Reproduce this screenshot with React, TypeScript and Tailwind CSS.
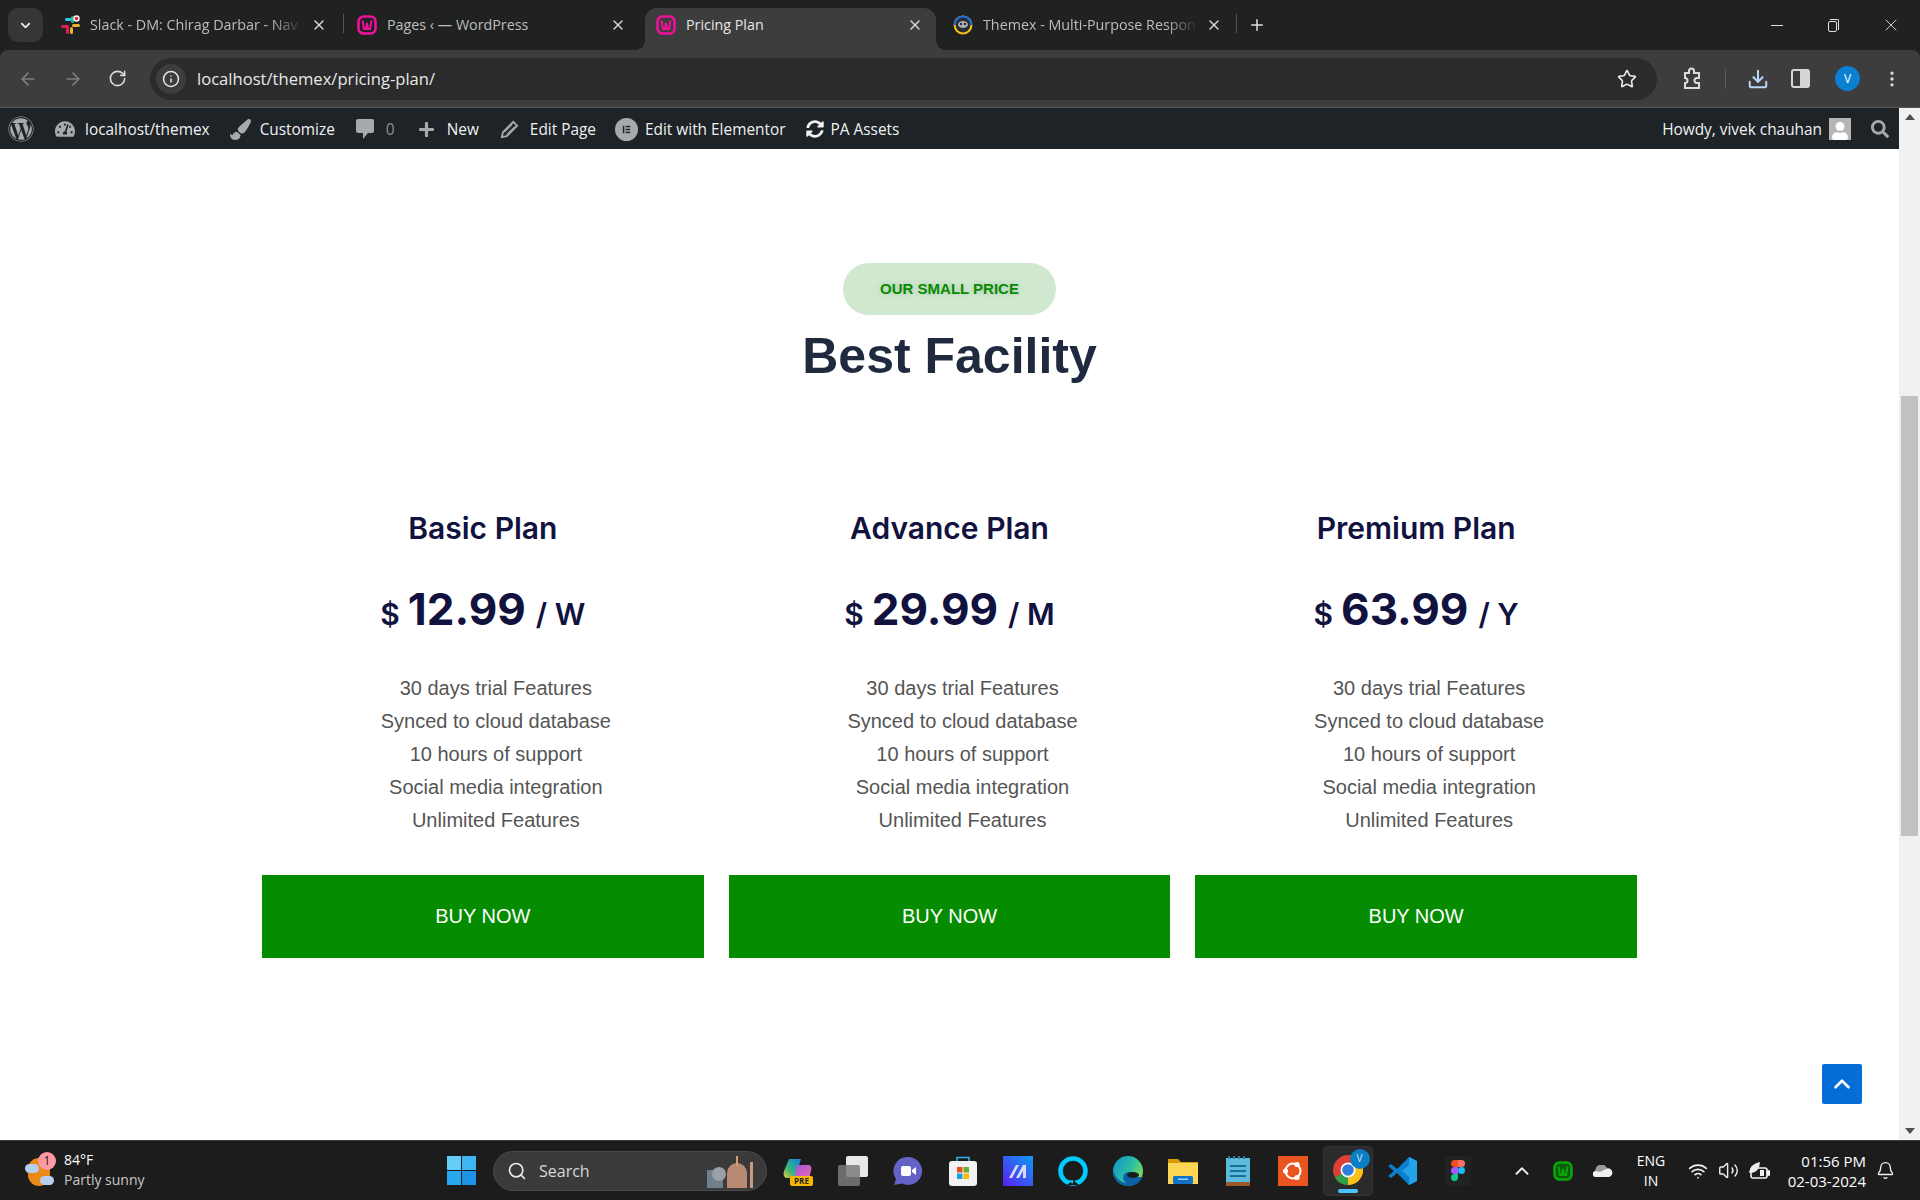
import {
  ArrowLeft,
  ArrowRight,
  Bell,
  ChevronDown,
  ChevronUp,
  Download,
  Info,
  MoreVertical,
  Plus,
  RotateCw,
  Search,
  Star,
  Volume2,
  Wifi,
  X,
} from "lucide-react";
import { FaPaintBrush, FaPlus, FaSearch, FaSyncAlt, FaTachometerAlt, FaUser, FaWordpress } from "react-icons/fa";

const plans = [
  { name: "Basic Plan", price: "12.99", period: "W" },
  { name: "Advance Plan", price: "29.99", period: "M" },
  { name: "Premium Plan", price: "63.99", period: "Y" },
];

const features = [
  "30 days trial Features",
  "Synced to cloud database",
  "10 hours of support",
  "Social media integration",
  "Unlimited Features",
];

function SlackIcon() {
  return (
    <svg viewBox="0 0 20 20" className="w-5 h-5 shrink-0">
      <rect x="7" y="1" width="3" height="7" rx="1.5" fill="#36c5f0" transform="rotate(90 8.5 4.5)" />
      <rect x="11" y="1" width="3" height="7" rx="1.5" fill="#2eb67d" />
      <rect x="12" y="9" width="8" height="3" rx="1.5" fill="#ecb22e" />
      <rect x="10" y="12" width="3" height="7" rx="1.5" fill="#ecb22e" />
      <rect x="1" y="10" width="8" height="3" rx="1.5" fill="#e01e5a" />
      <rect x="6" y="12" width="3" height="7" rx="1.5" fill="#e01e5a" />
      <circle cx="16.5" cy="3.5" r="3.2" fill="#fff" />
      <circle cx="16.5" cy="3.5" r="1.8" fill="#e01e4b" />
    </svg>
  );
}

function WampIcon({ color = "#f0109a", dark = false }: { color?: string; dark?: boolean }) {
  return (
    <svg viewBox="0 0 20 20" className="w-5 h-5 shrink-0">
      <rect x="1.5" y="1.5" width="17" height="17" rx="5" fill={dark ? "#0a5a0a" : "none"} stroke={color} strokeWidth="2.6" />
      <path d="M5.5 5.5 L7 14 H9 L10 8 L11 14 H13 L14.5 5.5" fill="none" stroke={color} strokeWidth="2" />
    </svg>
  );
}

function ThemexIcon() {
  return (
    <svg viewBox="0 0 20 20" className="w-5 h-5 shrink-0">
      <circle cx="10" cy="10" r="9.4" fill="#f5c518" />
      <path d="M0.6 10 A9.4 9.4 0 0 1 19.4 10 Z" fill="#1b6fe0" />
      <circle cx="10" cy="10" r="7.4" fill="#2a2d30" />
      <ellipse cx="10" cy="9.5" rx="5" ry="3.6" fill="#aab0b6" />
      <circle cx="8" cy="9" r="1.2" fill="#2a2d30" />
      <circle cx="12" cy="9" r="1.2" fill="#2a2d30" />
    </svg>
  );
}

function Tab({
  icon,
  title,
  className,
  active,
  divider,
  fade,
}: {
  icon: React.ReactNode;
  title: string;
  className: string;
  active?: boolean;
  divider?: boolean;
  fade?: boolean;
}) {
  return (
    <div className={`relative flex items-center h-[42px] pb-[8px] ${className} ${active ? "bg-[#3d3d3d] rounded-t-[12px]" : ""}`}>
      {active && (
        <>
          <span className="absolute bottom-0 -left-[10px] w-[10px] h-[10px] bg-[radial-gradient(circle_at_0_0,transparent_10px,#3d3d3d_10px)]" />
          <span className="absolute bottom-0 -right-[10px] w-[10px] h-[10px] bg-[radial-gradient(circle_at_100%_0,transparent_10px,#3d3d3d_10px)]" />
        </>
      )}
      {icon}
      <span
        className={`ml-[10px] flex-1 overflow-hidden whitespace-nowrap text-[14.3px] ${active ? "text-[#e6e6e6]" : "text-[#bdbdbd]"} ${
          fade ? "[mask-image:linear-gradient(to_right,black_85%,transparent)]" : ""
        }`}
      >
        {title}
      </span>
      <X size={16} strokeWidth={2} className="ml-2 shrink-0 text-[#d8d8d8]" />
      {divider && <span className="absolute right-0 top-[6px] h-[19px] w-px bg-[#545454]" />}
    </div>
  );
}

function WindowControls() {
  return (
    <div className="ml-auto flex items-center h-[42px] pb-[8px] pr-[19px] text-[#e0e0e0]">
      <span className="block w-[12px] h-px bg-[#e0e0e0]" />
      <span className="relative ml-[45px] block w-[11px] h-[13px]">
        <span className="absolute left-0 bottom-0 w-[9px] h-[11px] border border-[#e0e0e0] rounded-[2px]" />
        <span className="absolute right-0 top-0 w-[9px] h-[11px] border-t border-r border-[#e0e0e0] rounded-tr-[2px]" />
      </span>
      <X size={20} strokeWidth={1.1} className="ml-[42px]" />
    </div>
  );
}

function TabStrip() {
  return (
    <div className="flex items-end h-[50px] bg-[#202222] pl-2">
      <div className="mb-[8px] flex items-center justify-center w-[35px] h-[34px] rounded-[10px] bg-[#353636]">
        <ChevronDown size={15} strokeWidth={3} className="text-[#e8e8e8]" />
      </div>
      <div className="ml-[6px] flex items-end">
        <Tab icon={<SlackIcon />} title="Slack - DM: Chirag Darbar - Nav" className="w-[295px] pl-[11px] pr-[17px]" divider fade />
        <Tab icon={<WampIcon />} title="Pages ‹ — WordPress" className="w-[301px] pl-[13px] pr-[19px]" />
        <Tab icon={<WampIcon />} title="Pricing Plan" className="w-[291px] pl-[11px] pr-[13px]" active />
        <Tab icon={<ThemexIcon />} title="Themex - Multi-Purpose Respon" className="w-[301px] pl-[17px] pr-[15px]" divider fade />
      </div>
      <div className="flex items-center h-[42px] pb-[8px] pl-[11px]">
        <Plus size={18} strokeWidth={2} className="text-[#e0e0e0]" />
      </div>
      <WindowControls />
    </div>
  );
}

function Toolbar() {
  return (
    <div className="flex items-center h-[58px] bg-[#3d3d3d] rounded-t-[8px] border-b border-[#555] pl-[18px] font-['Open_Sans',sans-serif]">
      <ArrowLeft size={20} className="text-[#7f7f7f]" />
      <ArrowRight size={20} className="ml-[25px] text-[#7f7f7f]" />
      <RotateCw size={19} className="ml-[25px] text-[#dcdcdc]" />
      <div className="ml-[23px] flex items-center w-[1507px] h-[42px] rounded-full bg-[#2b2b2b] pl-[6px]">
        <span className="flex items-center justify-center w-[30px] h-[30px] rounded-full bg-[#3d3d3d]">
          <Info size={18} className="text-[#e6e6e6]" />
        </span>
        <span className="ml-[11px] pt-[2px] text-[16.6px] text-[#e8e8e8]">localhost/themex/pricing-plan/</span>
        <Star size={20} strokeWidth={2} className="ml-auto mr-[20px] text-[#e6e6e6]" />
      </div>
      <svg viewBox="0 0 24 24" className="ml-[23px] w-[24px] h-[24px] fill-none stroke-[#dcdcdc] stroke-2">
        <path d="M5 6h4V4a2.5 2.5 0 0 1 5 0v2h5v5h-2a2.5 2.5 0 0 0 0 5h2v5H5v-5a2.5 2.5 0 0 0 0-5Z" />
      </svg>
      <span className="ml-[21px] h-[20px] w-px bg-[#5d5d5d]" />
      <Download size={22} strokeWidth={2.2} className="ml-[21px] text-[#b9d5f5]" />
      <span className="ml-[22px] flex w-[19px] h-[19px] rounded-[3px] border-2 border-[#d6d6d6]">
        <span className="ml-auto w-[8px] h-full bg-[#d6d6d6]" />
      </span>
      <span className="ml-[25px] flex items-center justify-center w-[25px] h-[25px] rounded-full bg-[#0b7fd0] text-[12px] text-white">V</span>
      <MoreVertical size={20} className="ml-[22px] text-[#dcdcdc]" />
    </div>
  );
}

function AdminBar() {
  return (
    <div className="flex items-center h-[41px] pt-[3px] bg-[#1d2327] text-[15.4px] text-[#f0f0f1] font-['Open_Sans',sans-serif] shrink-0">
      <FaWordpress size={26} className="ml-[8px] -mt-[2px] text-[#a7aaad]" />
      <FaTachometerAlt size={20} className="ml-[21px] -mt-[2px] text-[#a7aaad]" />
      <span className="ml-[10px]">localhost/themex</span>
      <FaPaintBrush size={21} className="ml-[20px] -mt-[2px] text-[#a7aaad]" />
      <span className="ml-[9px]">Customize</span>
      <svg viewBox="0 0 18 20" className="ml-[21px] -mt-[2px] w-[18px] h-[20px] fill-[#a7aaad]">
        <path d="M2 0h14a2 2 0 0 1 2 2v10a2 2 0 0 1-2 2h-4l-5 6v-6H2a2 2 0 0 1-2-2V2a2 2 0 0 1 2-2Z" />
      </svg>
      <span className="ml-[12px] text-[#8c8f94]">0</span>
      <FaPlus size={17} className="ml-[23px] -mt-[2px] text-[#a7aaad]" />
      <span className="ml-[12px]">New</span>
      <svg viewBox="0 0 20 20" className="ml-[21px] -mt-[2px] w-[19px] h-[19px] fill-none stroke-[#a7aaad] stroke-2">
        <path d="M14 2l4 4L7 17l-5 1 1-5Z" />
        <path d="M5 13l8-8M7 15l8-8" strokeWidth="1" />
      </svg>
      <span className="ml-[11px]">Edit Page</span>
      <span className="ml-[19px] -mt-[2px] flex items-center justify-center w-[23px] h-[23px] rounded-full bg-[#a7aaad]">
        <svg viewBox="0 0 12 12" className="w-[11px] h-[11px] fill-[#1d2327]">
          <rect x="2" y="2" width="1.6" height="8" />
          <rect x="5" y="2" width="5" height="1.6" />
          <rect x="5" y="5.2" width="5" height="1.6" />
          <rect x="5" y="8.4" width="5" height="1.6" />
        </svg>
      </span>
      <span className="ml-[7px]">Edit with Elementor</span>
      <FaSyncAlt size={18} className="ml-[20px] -mt-[2px] text-[#f0f0f1]" />
      <span className="ml-[7px]">PA Assets</span>
      <span className="ml-auto">Howdy, vivek chauhan</span>
      <span className="ml-[7px] -mt-[2px] flex items-end justify-center w-[22px] h-[22px] bg-[#b5b5b5] overflow-hidden">
        <FaUser size={18} className="text-white" />
      </span>
      <FaSearch size={18} className="ml-[20px] mr-[10px] -mt-[2px] text-[#a7aaad]" />
    </div>
  );
}

function PlanColumn({ plan }: { plan: (typeof plans)[number] }) {
  return (
    <div className="flex flex-col w-[441.67px] items-center">
      <h3 className="h-[36px] leading-[36px] text-[30px] font-semibold text-[#12123f] font-['Inter',sans-serif]">{plan.name}</h3>
      <div className="mt-[33px] h-[64px] flex items-baseline font-['Inter',sans-serif] text-[#12123f] font-semibold">
        <span className="text-[30px]">$</span>
        <span className="ml-[8px] text-[44px] font-bold leading-[60px]">{plan.price}</span>
        <span className="ml-[10px] text-[30px]">/ {plan.period}</span>
      </div>
      <ul className="mt-[29px] w-full pl-[26px] text-center text-[20px] leading-[33px] text-[#555] font-['Liberation_Sans',sans-serif]">
        {features.map((item) => (
          <li key={item}>{item}</li>
        ))}
      </ul>
      <a className="mt-[38px] pb-[2px] flex items-center justify-center w-full h-[83px] bg-[#058c00] text-[20px] text-white font-['Liberation_Sans',sans-serif]">
        BUY NOW
      </a>
    </div>
  );
}

function PricingPage() {
  return (
    <div className="relative flex-1 bg-white flex flex-col items-center">
      <div className="mt-[114px] flex items-center justify-center w-[213px] h-[52px] rounded-full bg-[#d0e8d0] text-[15px] font-bold text-[#058c00] font-['Liberation_Sans',sans-serif] [text-shadow:0_0_6px_rgba(0,0,0,0.18)]">
        OUR SMALL PRICE
      </div>
      <h2 className="mt-[11px] text-[50px] leading-[60px] font-bold text-[#1f2a3f] font-['Liberation_Sans',sans-serif]">Best Facility</h2>
      <div className="mt-[124px] flex gap-[25px]">
        {plans.map((plan) => (
          <PlanColumn key={plan.name} plan={plan} />
        ))}
      </div>
      <button className="absolute right-[37px] top-[915px] flex items-center justify-center w-[40px] h-[40px] rounded-[2px] bg-[#076dd6]">
        <ChevronUp size={26} strokeWidth={2.4} className="text-white" />
      </button>
    </div>
  );
}

function Scrollbar() {
  return (
    <div className="flex flex-col items-center w-[21px] bg-[#f1f1f1] shrink-0">
      <span className="mt-[6px] w-0 h-0 border-x-[5px] border-x-transparent border-b-[6px] border-b-[#505050]" />
      <div className="mt-[276px] w-[17px] h-[440px] bg-[#c1c1c1]" />
      <span className="mt-auto mb-[6px] w-0 h-0 border-x-[5px] border-x-transparent border-t-[6px] border-t-[#505050]" />
    </div>
  );
}

function TaskbarSlot({ children, active }: { children: React.ReactNode; active?: boolean }) {
  return (
    <div className={`relative flex items-center justify-center shrink-0 h-[50px] ${active ? "bg-[#2b2b2b] rounded-[5px] border border-[#343434] w-[50px] mx-[2.5px]" : "w-[55px]"}`}>
      {children}
      {active && <span className="absolute bottom-[2px] w-[20px] h-[4px] rounded-full bg-[#4cc2ff]" />}
    </div>
  );
}

function AppIcons() {
  return (
    <>
      <TaskbarSlot>
        <svg viewBox="0 0 30 30" className="w-[30px] h-[30px]">
          <defs>
            <linearGradient id="cp" x1="0" y1="1" x2="1" y2="0">
              <stop offset="0" stopColor="#f5c832" />
              <stop offset="0.4" stopColor="#2fb87a" />
              <stop offset="1" stopColor="#1a7bea" />
            </linearGradient>
            <linearGradient id="cp2" x1="0" y1="0" x2="1" y2="1">
              <stop offset="0" stopColor="#a052e0" />
              <stop offset="1" stopColor="#ee6aa8" />
            </linearGradient>
          </defs>
          <path d="M6 3h12l-6 19H4C1 22 0 19 1 15Z" fill="url(#cp)" />
          <path d="M14 9h12c2 0 3 3 2 6l-2 8H11Z" fill="url(#cp2)" />
          <rect x="7" y="20" width="23" height="10" rx="2" fill="#f5b800" />
          <text x="18.5" y="28" textAnchor="middle" className="text-[8px] font-bold" fill="#222">PRE</text>
        </svg>
      </TaskbarSlot>
      <TaskbarSlot>
        <div className="relative w-[30px] h-[30px]">
          <span className="absolute right-0 top-0 w-[22px] h-[21px] rounded-[2px] bg-[#e8e8e8]" />
          <span className="absolute left-0 bottom-0 w-[22px] h-[21px] rounded-[2px] bg-[#7a7a7a]/85" />
        </div>
      </TaskbarSlot>
      <TaskbarSlot>
        <svg viewBox="0 0 30 30" className="w-[30px] h-[30px]">
          <path d="M15 1a14 14 0 1 1-6 26.6L1 29l2-6A14 14 0 0 1 15 1Z" fill="#6461c7" />
          <rect x="8" y="10" width="10" height="10" rx="2" fill="#fff" />
          <path d="M19 14l4-3v8l-4-3Z" fill="#fff" />
        </svg>
      </TaskbarSlot>
      <TaskbarSlot>
        <svg viewBox="0 0 30 30" className="w-[30px] h-[30px]">
          <path d="M9 5V1.5h12V5" fill="none" stroke="#2db4e8" strokeWidth="1.6" />
          <rect x="1" y="5" width="28" height="25" rx="3" fill="#f2f2f2" />
          <rect x="9" y="11" width="5.5" height="5.5" fill="#e8501f" />
          <rect x="15.5" y="11" width="5.5" height="5.5" fill="#72a82a" />
          <rect x="9" y="17.5" width="5.5" height="5.5" fill="#18a0e8" />
          <rect x="15.5" y="17.5" width="5.5" height="5.5" fill="#fdb900" />
        </svg>
      </TaskbarSlot>
      <TaskbarSlot>
        <svg viewBox="0 0 30 30" className="w-[30px] h-[30px]">
          <defs>
            <linearGradient id="ma" x1="0" y1="1" x2="1" y2="0">
              <stop offset="0" stopColor="#5a1ff5" />
              <stop offset="1" stopColor="#0f9bf0" />
            </linearGradient>
          </defs>
          <rect width="30" height="30" fill="url(#ma)" />
          <path d="M6 22 13 9h3L9 22Z M13 22 20 9h3v13h-3v-7l-4 7Z" fill="#dcd8f8" />
        </svg>
      </TaskbarSlot>
      <TaskbarSlot>
        <svg viewBox="0 0 30 30" className="w-[30px] h-[30px]">
          <circle cx="15" cy="15" r="12.5" fill="none" stroke="#00caff" strokeWidth="4.6" />
          <path d="M9 29 15 24 21 29Z" fill="#1b1b1b" />
          <path d="M15 27.5 L9.5 25 L15 24Z" fill="#00caff" />
        </svg>
      </TaskbarSlot>
      <TaskbarSlot>
        <svg viewBox="0 0 30 30" className="w-[30px] h-[30px]">
          <defs>
            <linearGradient id="edge" x1="0" y1="0" x2="1" y2="0.6">
              <stop offset="0" stopColor="#0c8fd6" />
              <stop offset="0.6" stopColor="#2cc0a0" />
              <stop offset="1" stopColor="#7ed957" />
            </linearGradient>
          </defs>
          <circle cx="15" cy="15" r="15" fill="url(#edge)" />
          <path d="M30 18c-1 8-8 12-14 12C8 30 0 24 0 15c3 8 9 12 13 12-4-3-4-10 2-11 5-1 7 2 6 5h9Z" fill="#0d5fa8" />
          <ellipse cx="20" cy="19" rx="6" ry="3" fill="#1b1b1b" />
        </svg>
      </TaskbarSlot>
      <TaskbarSlot>
        <svg viewBox="0 0 30 30" className="w-[30px] h-[30px]">
          <path d="M0 3h10l3 3h17v22H0Z" fill="#d79c0f" />
          <rect y="7" width="30" height="21" fill="#fcd552" />
          <rect x="5" y="20" width="20" height="8" rx="1.5" fill="#0f74c8" />
          <rect x="10" y="22.5" width="10" height="1.5" fill="#9bd0f5" />
        </svg>
      </TaskbarSlot>
      <TaskbarSlot>
        <svg viewBox="0 0 24 30" className="w-[24px] h-[30px]">
          <rect y="2" width="24" height="26" fill="#5dbbdc" />
          <rect y="26" width="24" height="4" fill="#9a5a2a" />
          <rect x="4" y="9" width="16" height="2" fill="#1a6f96" />
          <rect x="4" y="14" width="16" height="2" fill="#1a6f96" />
          <rect x="4" y="19" width="16" height="2" fill="#1a6f96" />
          <path d="M2 0h2v3H2ZM7 0h2v3H7ZM12 0h2v3h-2ZM17 0h2v3h-2Z" fill="#2d7fa5" />
        </svg>
      </TaskbarSlot>
      <TaskbarSlot>
        <svg viewBox="0 0 30 30" className="w-[30px] h-[30px]">
          <rect width="30" height="30" fill="#e95420" />
          <circle cx="15" cy="15" r="7.5" fill="none" stroke="#fff" strokeWidth="2" />
          <circle cx="7.5" cy="15" r="2.6" fill="#fff" />
          <circle cx="19" cy="8.5" r="2.6" fill="#fff" />
          <circle cx="19" cy="21.5" r="2.6" fill="#fff" />
        </svg>
      </TaskbarSlot>
      <TaskbarSlot active>
        <div className="relative w-[30px] h-[30px] -mt-[2px]">
          <svg viewBox="0 0 30 30" className="w-[30px] h-[30px]">
            <circle cx="15" cy="15" r="15" fill="#dd3f34" />
            <path d="M15 15 2 22.5A15 15 0 0 0 15 30Z" fill="#2f9f49" />
            <path d="M15 15 15 30A15 15 0 0 0 28 7.5Z" fill="#fbc116" />
            <circle cx="15" cy="15" r="7.5" fill="#fff" />
            <circle cx="15" cy="15" r="5.8" fill="#2f7de0" />
          </svg>
          <span className="absolute -right-[7px] -top-[6px] flex items-center justify-center w-[20px] h-[20px] rounded-full bg-[#0b7fc4] text-[10px] text-[#cfe8fa]">V</span>
        </div>
      </TaskbarSlot>
      <TaskbarSlot>
        <svg viewBox="0 0 30 30" className="w-[30px] h-[30px]">
          <path d="M21 1 29 5v20l-8 4L9 17 3 22l-3-2 6-5-6-5 3-2 6 5Z" fill="#0a7fcb" />
          <path d="M21 1 29 5v20l-8 4V9l-7 6 7 6" fill="#23a3ea" />
        </svg>
      </TaskbarSlot>
      <TaskbarSlot>
        <div className="flex items-center justify-center w-[26px] h-[30px] rounded-[2px] bg-[#222]">
          <svg viewBox="0 0 14 22" className="w-[14px] h-[22px]">
            <path d="M7 0H3.5a3.5 3.5 0 0 0 0 7H7Z" fill="#f24e1e" />
            <path d="M7 0h3.5a3.5 3.5 0 0 1 0 7H7Z" fill="#ff7262" />
            <path d="M7 7H3.5a3.5 3.5 0 0 0 0 7H7Z" fill="#a259ff" />
            <circle cx="10.5" cy="10.5" r="3.5" fill="#1abcfe" />
            <path d="M7 14H3.5a3.5 3.5 0 1 0 3.5 3.5Z" fill="#0acf83" />
          </svg>
        </div>
      </TaskbarSlot>
    </>
  );
}

function Taskbar() {
  return (
    <div className="flex items-center h-[60px] bg-[#1c1c1c] border-t border-[#3a3a3a] font-['Open_Sans',sans-serif] text-white whitespace-nowrap">
      <div className="relative shrink-0 ml-[25px] w-[32px] h-[34px]">
        <span className="absolute left-[3px] top-[4px] w-[22px] h-[28px] rounded-full bg-[#ea8a16]" />
        <span className="absolute left-0 top-[10px] w-[14px] h-[9px] rounded-full bg-[#b6cff0]" />
        <span className="absolute right-[3px] bottom-[3px] w-[14px] h-[9px] rounded-full bg-[#b6cff0]" />
        <span className="absolute left-[13px] -top-[2px] flex items-center justify-center w-[18px] h-[18px] rounded-full bg-[#ff99a4] text-[12px] text-[#1c1c1c]">1</span>
      </div>
      <div className="ml-[7px] pb-[2px] flex flex-col w-[120px] shrink-0 text-[14px] leading-[20px]">
        <span>84°F</span>
        <span className="text-[#c8c8c8]">Partly sunny</span>
      </div>
      <svg viewBox="0 0 29 29" className="ml-[263px] w-[29px] h-[29px] shrink-0">
        <rect width="14" height="14" fill="#63cdfa" />
        <rect x="15" width="14" height="14" fill="#3fb6f4" />
        <rect y="15" width="14" height="14" fill="#27a7ef" />
        <rect x="15" y="15" width="14" height="14" fill="#1b93e6" />
      </svg>
      <div className="ml-[17px] flex items-center shrink-0 w-[274px] h-[40px] rounded-full bg-[#3a3a3a] border border-[#4a4a4a] pl-[13px]">
        <Search size={20} strokeWidth={2} className="text-[#e8e8e8]" />
        <span className="ml-[12px] text-[16px] text-[#d8d8d8]">Search</span>
        <svg viewBox="0 0 50 34" className="ml-auto mr-[11px] w-[50px] h-[34px]">
          <rect x="2" y="16" width="16" height="18" fill="#6f7f8c" />
          <circle cx="14" cy="20" r="7" fill="#9aa0a5" />
          <path d="M22 34V19a10 10 0 0 1 20 0v15Z" fill="#b88a72" />
          <rect x="31" y="2" width="2" height="10" fill="#d0a070" />
          <rect x="45" y="8" width="3" height="26" fill="#c89a80" />
        </svg>
      </div>
      <div className="ml-[3px] flex items-center shrink-0">
        <AppIcons />
      </div>
      <ChevronUp size={22} strokeWidth={2} className="ml-[26px] shrink-0 text-[#f0f0f0]" />
      <span className="ml-[20px] shrink-0">
        <WampIcon color="#0aa60a" dark />
      </span>
      <svg viewBox="0 0 20 12" className="ml-[20px] w-[20px] h-[12px] shrink-0">
        <path d="M3 12a3 3 0 0 1-.5-6A6 6 0 0 1 14 3.5 4 4 0 0 1 16 12Z" fill="#f0f0f0" />
        <path d="M2.5 6A6 6 0 0 1 14 3.5L7 7Z" fill="#9a9a9a" />
      </svg>
      <div className="ml-[23px] flex flex-col items-center w-[30px] shrink-0 text-[14px] leading-[20px]">
        <span>ENG</span>
        <span>IN</span>
      </div>
      <Wifi size={20} strokeWidth={2} className="ml-[22px] shrink-0 text-[#f0f0f0]" />
      <Volume2 size={21} strokeWidth={1.6} className="ml-[10px] shrink-0 text-[#f0f0f0]" />
      <svg viewBox="0 0 22 18" className="ml-[9px] w-[22px] h-[18px] shrink-0 fill-none stroke-[#f0f0f0] stroke-[1.6]">
        <rect x="3" y="6" width="16" height="10" rx="2" />
        <rect x="19.5" y="9" width="2" height="4" fill="#f0f0f0" />
        <path d="M2 10C3 4 7 2 11 1c0 5-3 9-9 9Z" fill="#f0f0f0" />
        <rect x="12" y="8" width="4" height="6" fill="#f0f0f0" stroke="none" />
      </svg>
      <div className="ml-[18px] flex flex-col items-end w-[78px] shrink-0 text-[15px] leading-[20px]">
        <span>01:56 PM</span>
        <span>02-03-2024</span>
      </div>
      <Bell size={19} strokeWidth={1.7} className="ml-[10px] shrink-0 text-[#f0f0f0]" />
    </div>
  );
}

export default function App() {
  return (
    <div className="flex flex-col w-[1920px] h-[1200px] overflow-hidden bg-[#202222]">
      <div className="font-['Open_Sans',sans-serif]">
        <TabStrip />
      </div>
      <Toolbar />
      <div className="flex h-[1032px]">
        <div className="flex flex-col w-[1899px]">
          <AdminBar />
          <PricingPage />
        </div>
        <Scrollbar />
      </div>
      <Taskbar />
    </div>
  );
}
